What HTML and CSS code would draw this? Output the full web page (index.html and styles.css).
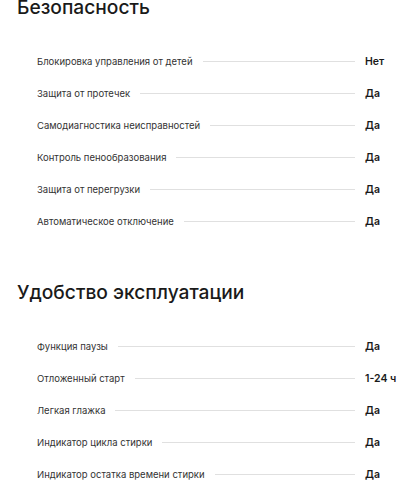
FILE: index.html
```html
<!DOCTYPE html>
<html lang="ru">
<head>
<meta charset="utf-8">
<link rel="stylesheet" href="styles.css">
</head>
<body>
<section class="group group-first">
  <h2 class="group-title">Безопасность</h2>
  <ul class="specs">
    <li class="spec"><span class="spec-name">Блокировка управления от детей</span><span class="spec-line"></span><span class="spec-value">Нет</span></li>
    <li class="spec"><span class="spec-name">Защита от протечек</span><span class="spec-line"></span><span class="spec-value">Да</span></li>
    <li class="spec"><span class="spec-name">Самодиагностика неисправностей</span><span class="spec-line"></span><span class="spec-value">Да</span></li>
    <li class="spec"><span class="spec-name">Контроль пенообразования</span><span class="spec-line"></span><span class="spec-value">Да</span></li>
    <li class="spec"><span class="spec-name">Защита от перегрузки</span><span class="spec-line"></span><span class="spec-value">Да</span></li>
    <li class="spec"><span class="spec-name">Автоматическое отключение</span><span class="spec-line"></span><span class="spec-value">Да</span></li>
  </ul>
</section>
<section class="group">
  <h2 class="group-title">Удобство эксплуатации</h2>
  <ul class="specs">
    <li class="spec"><span class="spec-name">Функция паузы</span><span class="spec-line"></span><span class="spec-value">Да</span></li>
    <li class="spec"><span class="spec-name">Отложенный старт</span><span class="spec-line"></span><span class="spec-value">1-24 ч</span></li>
    <li class="spec"><span class="spec-name">Легкая глажка</span><span class="spec-line"></span><span class="spec-value">Да</span></li>
    <li class="spec"><span class="spec-name">Индикатор цикла стирки</span><span class="spec-line"></span><span class="spec-value">Да</span></li>
    <li class="spec"><span class="spec-name">Индикатор остатка времени стирки</span><span class="spec-line"></span><span class="spec-value">Да</span></li>
  </ul>
</section>
</body>
</html>
```
FILE: styles.css
```css
html, body {
  margin: 0;
  padding: 0;
  background: #fff;
}
body {
  font-family: Inter, "Noto Sans", sans-serif;
  color: #1a1a1a;
  padding-left: 17px;
  overflow: hidden;
}
.group {
  margin-top: 43px;
}
.group-first {
  margin-top: -5px;
}
.group-title {
  margin: 0;
  font-size: 19.2px;
  line-height: 24px;
  font-weight: 500;
  color: #1a1a1a;
  letter-spacing: 0;
}
.specs {
  list-style: none;
  margin: 26px 0 0 0;
  padding: 0 0 0 20px;
}
.spec {
  display: flex;
  align-items: center;
  height: 32px;
}
.spec-name {
  font-size: 9.5px;
  color: #333;
  white-space: nowrap;
}
.spec-line {
  flex: 1;
  height: 1px;
  background: #e0e0e0;
  margin: 0 10px 0 10px;
}
.spec-value {
  width: 37px;
  flex: none;
  font-size: 10.5px;
  font-weight: 600;
  color: #1a1a1a;
  white-space: nowrap;
}
```
